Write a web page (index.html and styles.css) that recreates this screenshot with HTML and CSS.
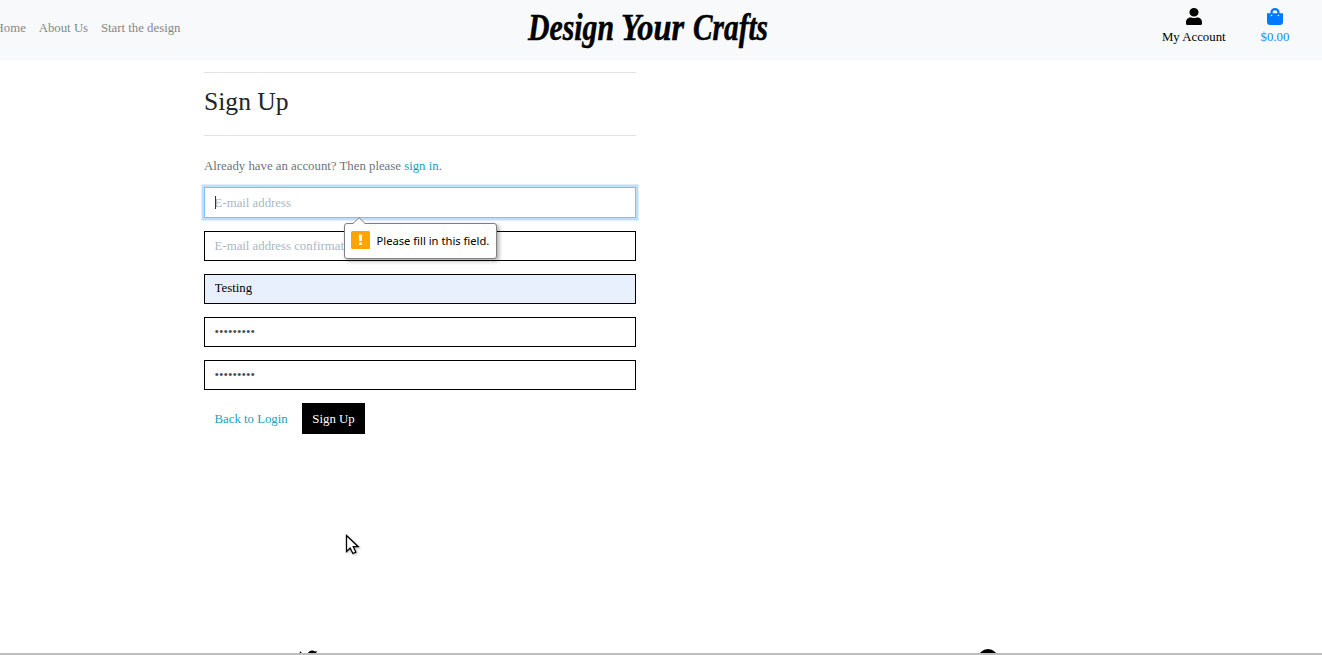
FILE: index.html
```html
<!DOCTYPE html>
<html lang="en">
<head>
<meta charset="utf-8">
<title>Design Your Crafts</title>
<link rel="stylesheet" href="styles.css">
</head>
<body>
<header class="navbar">
  <nav class="links"><a>Home</a><a>About Us</a><a>Start the design</a></nav>
  <svg class="brand" width="250" height="60" viewBox="0 0 250 60" role="img" aria-label="Design Your Crafts">
    <text x="5" y="40" textLength="86" lengthAdjust="spacingAndGlyphs">Design</text>
    <text x="98" y="40" textLength="63" lengthAdjust="spacingAndGlyphs">Your</text>
    <text x="170" y="40" textLength="75" lengthAdjust="spacingAndGlyphs">Crafts</text>
  </svg>
  <div class="tools">
    <a class="tool account">
      <svg width="16" height="17" viewBox="0 0 448 512" preserveAspectRatio="none"><path d="M224 256c70.700 0 128-57.300 128-128S294.700 0 224 0 96 57.300 96 128s57.300 128 128 128zm89.600 32h-16.700a174 174 0 0 1-145.800 0h-16.700C60.200 288 0 348.200 0 422.400V464c0 26.500 21.500 48 48 48h352c26.500 0 48-21.500 48-48v-41.600c0-74.200-60.200-134.400-134.400-134.400z"/></svg>
      <span>My Account</span>
    </a>
    <a class="tool bag">
      <svg width="16" height="17" viewBox="0 0 448 512" preserveAspectRatio="none"><path fill="currentColor" d="M352 160v-32C352 57.400 294.600 0 224 0S96 57.400 96 128v32H0v272c0 44.200 35.800 80 80 80h288c44.200 0 80-35.800 80-80V160h-96zm-192-32c0-35.300 28.700-64 64-64s64 28.700 64 64v32H160v-32zm160 120a24 24 0 1 1 0-48 24 24 0 0 1 0 48zm-192 0a24 24 0 1 1 0-48 24 24 0 0 1 0 48z"/></svg>
      <span>$0.00</span>
    </a>
  </div>
</header>
<main class="content">
  <h1>Sign Up</h1>
  <p class="hint">Already have an account? Then please <a>sign in</a>.</p>
  <form class="form">
    <div class="field">
      <input class="control focused" type="text" placeholder="E-mail address">
      <i class="caret"></i>
      <div class="bubble">
        <svg class="arrow" width="14" height="8" viewBox="0 0 14 8"><path d="M0 8V7L1 6.500 7 .7l6 5.800 1 .5v1z" fill="#fff"/><path d="M0 6.500h1L7 .7l6 5.800h1" fill="none" stroke="#808080"/></svg>
        <svg class="warning" width="19" height="18" viewBox="0 0 19 18"><rect width="19" height="18" rx="1.500" fill="#ffa400"/><path d="M7.800 3.500h3.400l-.5 6.500H8.300zM8 11.500h3v2.500H8z" fill="#fff"/></svg>
        <span>Please fill in this field.</span>
      </div>
    </div>
    <input class="control" type="text" placeholder="E-mail address confirmation">
    <input class="control filled" type="text" value="Testing">
    <input class="control" type="password" value="password1">
    <input class="control" type="password" value="password1">
    <div class="actions"><a class="back">Back to Login</a><button type="button" class="submit">Sign Up</button></div>
  </form>
</main>
<footer class="footer">
  <svg class="twitter" width="24" height="4" viewBox="0 0 24 4"><path d="M2.500 4l.8-1.800L4.800 4zM11 4c.7-1.600 2.200-2.500 4-2.500 1.300 0 2.200.4 3 1l2.200-.5L19 4z"/></svg>
  <svg class="round" width="20" height="4" viewBox="0 0 20 4"><circle cx="10" cy="10" r="10"/></svg>
</footer>
<svg class="cursor" width="16" height="23" viewBox="0 0 16 23"><path d="M1.500 1.500v16l3.700-3.500 2.600 5.500 3-1.400-2.500-5.400h4.900z" fill="#fff" stroke="#000" stroke-width="1.300"/></svg>
</body>
</html>
```
FILE: styles.css
```css
* { box-sizing: border-box; }
body {
  margin: 0;
  height: 655px;
  display: flex;
  flex-direction: column;
  overflow: hidden;
  background: #fff;
  color: #212529;
  font: 12.8px/19.2px "Liberation Serif", serif;
}
.navbar {
  height: 60px;
  flex: none;
  display: grid;
  grid-template-columns: 523px 250px 1fr;
  background: #f8f9fa;
}
.links {
  display: flex;
  gap: 12.8px;
  padding-top: 19px;
  margin-left: -5.400px;
  color: #868788;
}
.brand { overflow: visible; }
.brand text {
  font: italic bold 37px "Liberation Serif", serif;
  fill: #000;
  stroke: #000;
  stroke-width: .5px;
}
.tools {
  display: flex;
  justify-content: flex-end;
  gap: 35px;
  padding: 8px 32.600px 0 0;
}
.tool {
  display: flex;
  flex-direction: column;
  align-items: center;
  gap: 3px;
}
.account { color: #000; }
.bag { color: #007bff; }
.bag span { color: #0c8ffb; }
.content {
  width: 432px;
  margin: 12px 0 0 204px;
  flex: 1;
}
h1 {
  height: 64px;
  margin: 0;
  padding-top: 13px;
  border: solid #e3e3e4;
  border-width: 1px 0;
  font-size: 25.6px;
  font-weight: 400;
  line-height: 31px;
}
.hint {
  margin: 21px 0 11px;
  color: #6c757d;
}
.hint a, .back { color: #17a2b8; }
.form {
  display: flex;
  flex-direction: column;
  gap: 13px;
}
.field { position: relative; height: 31px; }
.control {
  display: block;
  width: 100%;
  height: 30px;
  margin: 0;
  padding: 0 9.6px;
  border: 1px solid #000;
  border-radius: 0;
  outline: 0;
  background: #fff;
  color: #495057;
  font: inherit;
}
.control::placeholder { color: #aab7c4; opacity: 1; }
.focused {
  height: 31px;
  padding-top: 1px;
  border-color: #80bdff;
  box-shadow: 0 0 0 2.500px #bfdeff;
}
.filled { background: #e8f0fe; color: #000; padding-bottom: 2px; }
.caret {
  position: absolute;
  left: 11px;
  top: 9px;
  width: 1px;
  height: 13px;
  background: #333;
}
.bubble {
  position: absolute;
  z-index: 1;
  left: 140px;
  top: 36px;
  width: 153px;
  height: 36px;
  display: flex;
  align-items: center;
  gap: 6.500px;
  padding: 0 0 1px 6px;
  border: 1px solid #808080;
  border-radius: 3px;
  background: #fff;
  box-shadow: 2px 2px 4px rgba(0, 0, 0, .35);
  color: #000;
  font: 11.2px/18px "Noto Sans", sans-serif;
  white-space: nowrap;
}
.arrow { position: absolute; left: 6.500px; top: -7px; }
.warning { margin-bottom: 2px; }
.actions { display: flex; height: 31px; }
.back { width: 98px; padding: 7px 10.500px 0; white-space: nowrap; }
.submit {
  width: 63px;
  padding: 1px 0 0;
  border: 0;
  background: #000;
  color: #fff;
  font: inherit;
}
.footer {
  height: 6px;
  display: flex;
  border-bottom: 2px solid #bdbdbd;
}
.twitter { margin-left: 297px; }
.round { margin-left: 657px; }
.cursor {
  position: absolute;
  left: 345px;
  top: 534px;
  filter: drop-shadow(1px 1px 1px rgba(0, 0, 0, .3));
}
```
